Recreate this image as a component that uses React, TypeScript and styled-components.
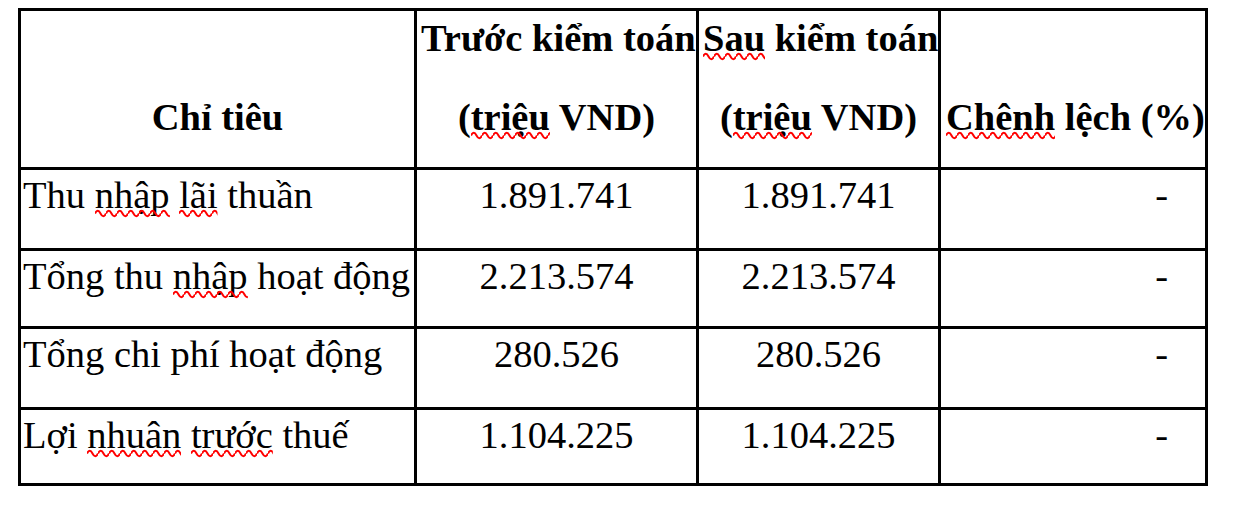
import { useId, type ReactNode } from "react";
import styled, { createGlobalStyle } from "styled-components";

const GlobalStyle = createGlobalStyle`
  html,
  body {
    margin: 0;
    padding: 0;
    background: #ffffff;
  }
`;

const Page = styled.div`
  padding: 8px 0 0 18px;
`;

const Table = styled.table`
  border-collapse: separate;
  border-spacing: 0;
  table-layout: fixed;
  width: 1190px;
  border-top: 3px solid #000;
  border-left: 3px solid #000;
  font-family: "Liberation Serif", "Times New Roman", serif;
  font-size: 38.5px;
  color: #000;
`;

const Col = styled.col<{ $w: number }>`
  width: ${(p) => p.$w}px;
`;

const Row = styled.tr<{ $h: number }>`
  height: ${(p) => p.$h}px;
`;

const HeadCell = styled.th<{ $align?: "left" | "center" }>`
  box-sizing: border-box;
  border-right: 3px solid #000;
  border-bottom: 3px solid #000;
  vertical-align: bottom;
  padding: 0 ${(p) => (p.$align === "left" ? "0" : "4px")} 28px
    ${(p) => (p.$align === "left" ? "5px" : "4px")};
  text-align: ${(p) => p.$align ?? "center"};
  font-weight: bold;
  white-space: nowrap;
`;

const HeadLine = styled.div`
  line-height: 44px;

  & + & {
    margin-top: 35px;
  }
`;

const Cell = styled.td<{ $align: "left" | "center" | "right" }>`
  box-sizing: border-box;
  border-right: 3px solid #000;
  border-bottom: 3px solid #000;
  vertical-align: top;
  padding: 3px ${(p) => (p.$align === "right" ? "37px" : "0")} 0
    ${(p) => (p.$align === "left" ? "2px" : "0")};
  line-height: 44px;
  text-align: ${(p) => p.$align};
  white-space: nowrap;
`;

// word flagged by the spell checker
const Flagged = styled.span`
  position: relative;
`;

// red squiggle drawn under the flagged word
const Wave = styled.svg`
  position: absolute;
  left: 0;
  bottom: -2px;
  width: 100%;
  height: 9px;
  pointer-events: none;
`;

function Squiggle({ children }: { children: ReactNode }) {
  const id = useId();
  return (
    <Flagged>
      {children}
      <Wave aria-hidden="true">
        <defs>
          <pattern id={id} width="11" height="9" patternUnits="userSpaceOnUse">
            <path
              d="M0 4.5 Q2.75 -1 5.5 4.5 T11 4.5"
              fill="none"
              stroke="#f00"
              strokeWidth="2"
            />
          </pattern>
        </defs>
        <rect width="100%" height="9" fill={`url(#${id})`} />
      </Wave>
    </Flagged>
  );
}

const rows = [
  {
    label: (
      <>
        Thu <Squiggle>nhập</Squiggle> <Squiggle>lãi</Squiggle> thuần
      </>
    ),
    before: "1.891.741",
    after: "1.891.741",
    height: 81,
  },
  {
    label: (
      <>
        Tổng thu <Squiggle>nhập</Squiggle> hoạt động
      </>
    ),
    before: "2.213.574",
    after: "2.213.574",
    height: 78,
  },
  {
    label: <>Tổng chi phí hoạt động</>,
    before: "280.526",
    after: "280.526",
    height: 81,
  },
  {
    label: (
      <>
        Lợi <Squiggle>nhuân</Squiggle> <Squiggle>trước</Squiggle> thuế
      </>
    ),
    before: "1.104.225",
    after: "1.104.225",
    height: 76,
  },
];

function App() {
  return (
    <>
      <GlobalStyle />
      <Page>
        <Table>
          <colgroup>
            <Col $w={396} />
            <Col $w={282} />
            <Col $w={242} />
            <Col $w={267} />
          </colgroup>
          <thead>
            <Row $h={159}>
              <HeadCell>
                <HeadLine>Chỉ tiêu</HeadLine>
              </HeadCell>
              <HeadCell>
                <HeadLine>Trước kiểm toán</HeadLine>
                <HeadLine>
                  (<Squiggle>triệu</Squiggle> VND)
                </HeadLine>
              </HeadCell>
              <HeadCell>
                <HeadLine>
                  <Squiggle>Sau</Squiggle> kiểm toán
                </HeadLine>
                <HeadLine>
                  (<Squiggle>triệu</Squiggle> VND)
                </HeadLine>
              </HeadCell>
              <HeadCell $align="left">
                <HeadLine>
                  <Squiggle>Chênh</Squiggle> lệch (%)
                </HeadLine>
              </HeadCell>
            </Row>
          </thead>
          <tbody>
            {rows.map((r, i) => (
              <Row key={i} $h={r.height}>
                <Cell $align="left">{r.label}</Cell>
                <Cell $align="center">{r.before}</Cell>
                <Cell $align="center">{r.after}</Cell>
                <Cell $align="right">-</Cell>
              </Row>
            ))}
          </tbody>
        </Table>
      </Page>
    </>
  );
}

export default App;
